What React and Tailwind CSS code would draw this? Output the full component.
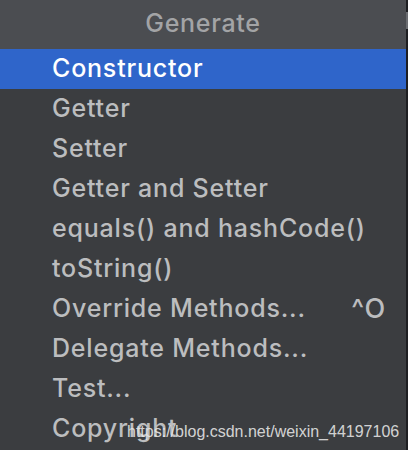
import React from 'react';

const items = [
  { label: 'Constructor', active: true },
  { label: 'Getter' },
  { label: 'Setter' },
  { label: 'Getter and Setter' },
  { label: 'equals() and hashCode()' },
  { label: 'toString()' },
  { label: 'Override Methods...', shortcut: '^O' },
  { label: 'Delegate Methods...' },
  { label: 'Test...' },
  { label: 'Copyright' },
];

export default function App() {
  return (
    <div className="relative w-[408px] h-[450px] overflow-hidden bg-[#1e1f22] flex" style={{ fontFamily: 'Inter, "Noto Sans", sans-serif' }}>
      <div className="w-[406px] h-full bg-[#3b3d40] flex flex-col">
        {/* header */}
        <div className="h-[49px] bg-[#4b4d51] flex items-center justify-center pb-[2px]">
          <span className="text-[25px] font-medium text-[#a3a4a6] tracking-[0.7px]">Generate</span>
        </div>
        {items.map((it) => (
          <div
            key={it.label}
            className={`h-[40px] flex items-center justify-between pl-[52px] pr-[20px] text-[25px] font-medium tracking-[0.8px] ${it.active ? 'bg-[#2f65ca] text-white' : 'text-[#bcbdbf]'}`}
          >
            <span>{it.label}</span>
            {it.shortcut && <span className="text-[27px]">{it.shortcut}</span>}
          </div>
        ))}
      </div>
      <div className="flex-1 relative">
        <div className="absolute top-[12px] left-0 w-[2px] h-[17px] bg-[#6a6c70]" />
      </div>
      {/* watermark */}
      <span className="absolute left-[127px] top-[420px] text-[16px] text-[#e6e6e6]/90" style={{ fontFamily: '"Liberation Sans", Arial, sans-serif' }}>
        https://blog.csdn.net/weixin_44197106
      </span>
    </div>
  );
}
